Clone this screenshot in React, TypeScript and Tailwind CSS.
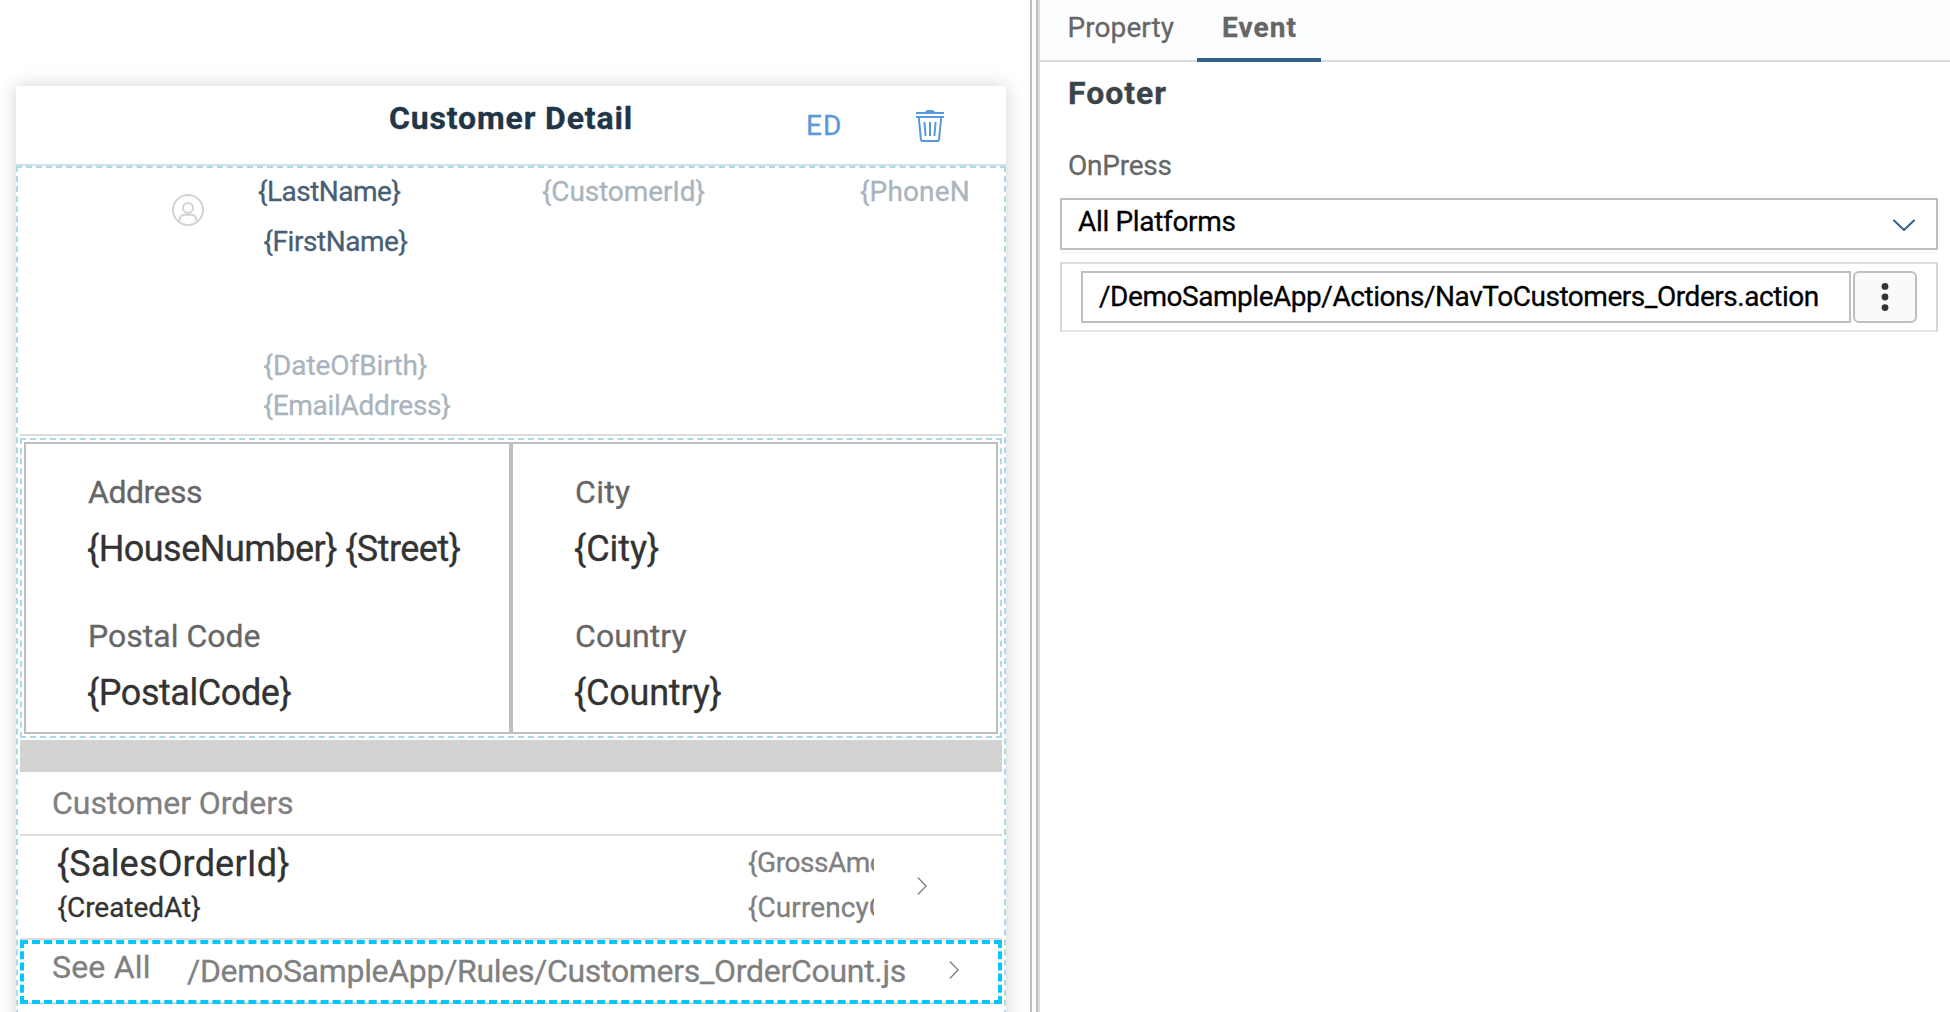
import type { ReactNode } from "react";

function TrashIcon() {
  return (
    <svg className="h-8 w-7" viewBox="0 0 28 32" fill="none" stroke="#5999db" strokeWidth="2">
      <path d="M0 3h28M0 7h28" />
      <path d="M9 2.4 Q9.5 0 12 0 H16 Q18.500 0 19 2.400Z" fill="#5999db" stroke="none" />
      <path d="M2.800 7.500 4.900 29.300Q5.100 31 6.300 31h15.400q1.200 0 1.400-1.700L25.200 7.500" />
      <path d="M8.400 12 9.600 26M14 12v14M19.600 12 18.400 26" />
    </svg>
  );
}

function PersonIcon() {
  return (
    <svg className="h-8 w-8" viewBox="0 0 32 32" fill="none" stroke="#d3d3d3" strokeWidth="2">
      <circle cx="16" cy="16" r="15" />
      <circle cx="16" cy="14" r="5" />
      <path d="M7.400 27.800V27q0-6.200 6.200-6.200h4.800q6.200 0 6.200 6.200v.8" />
    </svg>
  );
}

function ChevronRight() {
  return (
    <svg className="h-[18px] w-[10px]" viewBox="0 0 10 18" fill="none" stroke="#808080" strokeWidth="1.300">
      <path d="M.8.500 9.100 9 .8 17.500" />
    </svg>
  );
}

function Field({ label, value }: { label: ReactNode; value: ReactNode }) {
  return (
    <div className="flex flex-col gap-[17px]">
      <div className="h-10 pl-[62px] text-[32px] leading-10 text-[#666]">{label}</div>
      <div className="h-[39px] pl-[61px] text-[36px] leading-10 text-[#333]">{value}</div>
    </div>
  );
}

function PagePreview() {
  return (
    <section className="w-[1030px] shrink-0 pt-[86px] pl-4">
      <div className="w-[990px] bg-white shadow-[0_0_18px_rgba(0,0,0,0.18)]">
        <header className="flex h-20 items-start border-b-2 border-[#d1e0ee]">
          <h1 className="mt-3 ml-[373px] w-[417px] text-[32px] leading-10 font-bold tracking-[0.85px] text-[#223548]">
            Customer Detail
          </h1>
          <span className="mt-5 w-[110px] text-[28px] leading-10 tracking-[1.2px] text-[#5999db]">ED</span>
          <span className="mt-6"><TrashIcon /></span>
        </header>

        <div className="h-[900px] border-2 border-b-0 border-dashed border-[#add8e6] p-0.5">
          <div className="flex h-[266px] border-b-2 border-[#dcdcdc] text-[28px] leading-8">
            <div className="mt-6 ml-[152px] w-[86px]"><PersonIcon /></div>
            <div className="w-[284px] pt-1.5">
              <div className="tracking-[-0.51px] text-[#475e75]">{"{LastName}"}</div>
              <div className="mt-[18px] ml-[5.5px] tracking-[-0.45px] text-[#475e75]">{"{FirstName}"}</div>
              <div className="mt-[92px] ml-[5.5px] tracking-[-0.06px] text-[#a9b4be]">{"{DateOfBirth}"}</div>
              <div className="mt-2 ml-[5.5px] tracking-[-0.3px] text-[#a9b4be]">{"{EmailAddress}"}</div>
            </div>
            <div className="w-[318px] pt-1.5 tracking-[-0.12px] text-[#a9b4be]">{"{CustomerId}"}</div>
            <div className="h-10 w-[109px] overflow-hidden pt-1.5 tracking-[0.14px] whitespace-nowrap text-[#a9b4be]">
              {"{PhoneN"}
            </div>
          </div>

          <div className="mt-0.5 border-2 border-dashed border-[#add8e6] p-0.5">
            <div className="grid h-[292px] grid-cols-2">
              <div className="flex flex-col gap-12 border-2 border-[#bfbfbf] pt-7">
                <Field
                  label={<span className="tracking-[-0.5px]">Address</span>}
                  value={<span className="tracking-[-0.53px]">{"{HouseNumber} {Street}"}</span>}
                />
                <Field
                  label={<span className="tracking-[0.01px]">Postal Code</span>}
                  value={<span className="tracking-[-0.44px]">{"{PostalCode}"}</span>}
                />
              </div>
              <div className="flex flex-col gap-12 border-2 border-[#bfbfbf] pt-7">
                <Field
                  label={<span className="tracking-[0.31px]">City</span>}
                  value={<span className="tracking-[-0.05px]">{"{City}"}</span>}
                />
                <Field
                  label={<span className="tracking-[0.09px]">Country</span>}
                  value={<span className="tracking-[-0.2px]">{"{Country}"}</span>}
                />
              </div>
            </div>
          </div>

          <div className="mt-0.5 h-8 bg-[#d3d3d3]" />
          <div className="h-16 border-b-2 border-[#dcdcdc] pt-[11px] pl-8 text-[32px] leading-10 tracking-[-0.04px] text-[#808080]">
            Customer Orders
          </div>
          <div className="flex h-[104px] border-b-2 border-[#dcdcdc]">
            <div className="w-[729px] pt-2 pl-[37px] text-[#333]">
              <div className="text-[36px] leading-10 tracking-[0.18px]">{"{SalesOrderId}"}</div>
              <div className="mt-2 ml-[0.500px] text-[28px] leading-8 tracking-[-0.03px]">{"{CreatedAt}"}</div>
            </div>
            <div className="-ml-px w-[126px] overflow-hidden pt-[11px] text-[28px] leading-8 text-[#808080]">
              <div className="tracking-[-0.45px]">{"{GrossAmount}"}</div>
              <div className="mt-[13px] tracking-[0.08px]">{"{CurrencyCode}"}</div>
            </div>
            <div className="mt-[41px] ml-[43px]"><ChevronRight /></div>
          </div>
          <div className="h-16 border-b-2 border-[#d9d9d9]">
            <div className="flex h-16 border-4 border-dashed border-[#00c8ff] text-[32px] leading-10 text-[#808080]">
              <div className="mt-[3px] ml-7 w-[135px] tracking-[0.2px]">See All</div>
              <div className="mt-[7px] w-[762px] tracking-[-0.31px] whitespace-nowrap">
                /DemoSampleApp/Rules/Customers_OrderCount.js
              </div>
              <div className="mt-[17px]"><ChevronRight /></div>
            </div>
          </div>
        </div>
      </div>
    </section>
  );
}

function EventPanel() {
  return (
    <section className="grow bg-white">
      <nav className="flex h-[62px] items-start border-b-2 border-[#d9dadd] bg-[#fcfdfe] text-[28px] leading-8 text-[#666]">
        <div className="w-[157px] pt-3 pl-[27.5px] tracking-[0.08px]">Property</div>
        <div className="h-[62px] w-[124px] border-b-4 border-[#346187] pt-3 pl-[25px] font-bold tracking-[1.1px]">
          Event
        </div>
      </nav>
      <h2 className="mt-[11px] ml-7 text-[32px] leading-10 font-bold tracking-[0.95px] text-[#3b4449]">Footer</h2>
      <div className="mt-[37px] ml-7 text-[28px] leading-8 tracking-[-0.24px] text-[#666]">OnPress</div>
      <div className="mt-4 ml-5 flex h-[52px] w-[878px] justify-between border-2 border-[#bfbfbf] pt-1.5 pr-[21px] pl-4">
        <span className="text-[28px] leading-8 tracking-[-0.33px] text-black">All Platforms</span>
        <svg className="mt-[13px] h-3 w-[22px]" viewBox="0 0 22 12" fill="none" stroke="#346187" strokeWidth="2" strokeLinecap="round" strokeLinejoin="round">
          <path d="M1 1.500 11 11 21 1.500" />
        </svg>
      </div>
      <div className="mt-0.5 ml-5 h-0.5 w-[878px] bg-[#f8f8f8]" />
      <div className="mt-2 ml-5 flex h-[70px] w-[878px] gap-0.5 border-2 border-t-[#dcdcdc] border-r-[#d6d6d6] border-b-[#e5e5e5] border-l-[#d6d6d6] pt-[7px] pl-[19px]">
        <div className="h-[52px] w-[770px] border-2 border-[#bfbfbf] pt-2 pl-4 text-[28px] leading-8 tracking-[-0.46px] whitespace-nowrap text-black">
          /DemoSampleApp/Actions/NavToCustomers_Orders.action
        </div>
        <button className="flex h-[52px] w-16 items-center justify-center rounded-md border-2 border-[#bfbfbf] bg-[#f9fafa]">
          <svg className="h-7 w-2" viewBox="0 0 8 28" fill="#333">
            <circle cx="4" cy="3.400" r="3.400" />
            <circle cx="4" cy="14" r="3.400" />
            <circle cx="4" cy="24.600" r="3.400" />
          </svg>
        </button>
      </div>
    </section>
  );
}

export default function App() {
  return (
    <main className="flex h-[1012px] w-[1950px] overflow-hidden bg-white font-['Roboto',sans-serif] [-webkit-text-stroke:0.3px]">
      <PagePreview />
      <div className="flex w-2.5 shrink-0 justify-between">
        <div className="w-0.5 bg-[#bfbfbf]" />
        <div className="w-1 border-r-2 border-l-2 border-l-[#bfbfbf] border-r-[#dadce2]" />
      </div>
      <EventPanel />
    </main>
  );
}
